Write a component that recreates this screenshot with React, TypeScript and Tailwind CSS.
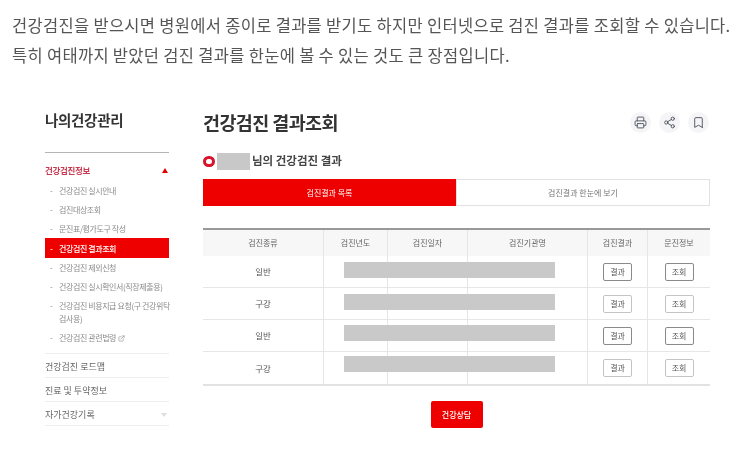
import React from 'react';
import { Printer, Share2, Bookmark, ExternalLink } from 'lucide-react';

const subMenu = [
  { label: '건강검진 실시안내', h: 'h-[19px]' },
  { label: '검진대상조회', h: 'h-[19px]' },
  { label: '문진표/평가도구 작성', h: 'h-[19px]' },
  { label: '건강검진 결과조회', h: 'h-[20px]', active: true },
  { label: '건강검진 제외신청', h: 'h-[19px]' },
  { label: '건강검진 실시확인서(직장제출용)', h: 'h-[19px]' },
  { label: '건강검진 비용지급 요청(구 건강위탁\n검사용)', h: 'h-[32px]' },
  { label: '건강검진 관련법령', h: 'h-[19px]', link: true },
];

const rows = [
  { kind: '일반', top: 'top-[6px]' },
  { kind: '구강', top: 'top-[6px]' },
  { kind: '일반', top: 'top-[5px]' },
  { kind: '구강', top: 'top-[4px]' },
];

const cellBorder = 'border-r border-[#e6e6e6]';

const SmallButton: React.FC<{ label: string; dark: boolean }> = ({ label, dark }) => (
  <button
    className={`w-[29px] h-[18px] rounded-[2px] border bg-white text-[8px] leading-none text-[#555] ${
      dark ? 'border-[#8a8a8a]' : 'border-[#c4c4c4]'
    }`}
  >
    <span className="blur-[0.3px]">{label}</span>
  </button>
);

const App: React.FC = () => {
  return (
    <div
      className="w-[755px] h-[455px] overflow-hidden bg-white pt-[10px]"
      style={{ fontFamily: '"Noto Sans CJK KR", "Noto Sans", sans-serif' }}
    >
      <p className="pl-[12px] text-[16.5px] leading-[30px] tracking-[0.3px] text-[#555] whitespace-nowrap blur-[0.3px]">
        건강검진을 받으시면 병원에서 종이로 결과를 받기도 하지만 인터넷으로 검진 결과를 조회할 수 있습니다.
        <br />
        특히 여태까지 받았던 검진 결과를 한눈에 볼 수 있는 것도 큰 장점입니다.
      </p>

      <div className="flex pl-[45px] pt-[39px]">
        {/* left menu */}
        <aside className="w-[124px] mr-[34px]">
          <h2 className="h-[26px] -mt-[2px] text-[14.5px] leading-[26px] tracking-[-0.3px] font-bold text-[#333] blur-[0.3px]">
            나의건강관리
          </h2>
          <div className="mt-[19px] border-t border-[#b5b5b5] h-[28px] pt-[8px] flex items-center justify-between">
            <span className="text-[8.5px] font-bold tracking-[-0.3px] text-[#c8384f] blur-[0.3px]">건강검진정보</span>
            <span className="mr-[1px] w-0 h-0 border-x-[3.5px] border-x-transparent border-b-[5px] border-b-[#e60000]" />
          </div>
          <ul className="mt-[1px] pb-[6px] border-b border-[#eeeeee]">
            {subMenu.map((item) => (
              <li
                key={item.label}
                className={`flex pl-[5px] text-[8px] leading-[13px] tracking-[-0.4px] whitespace-pre blur-[0.35px] ${item.h} ${
                  item.active ? 'bg-[#ee0000] text-white font-medium items-center' : 'text-[#8b8b8b] pt-[3px] items-start'
                }`}
              >
                <span className="w-[9px] shrink-0">-</span>
                <span>
                  {item.label}
                  {item.link && <ExternalLink size={7} className="inline ml-[2px] mb-[1px]" />}
                </span>
              </li>
            ))}
          </ul>
          {['건강검진 로드맵', '진료 및 투약정보', '자가건강기록'].map((label, i) => (
            <div
              key={label}
              className="h-[24px] pt-[2px] flex items-center justify-between border-b border-[#eeeeee] text-[9px] text-[#666]"
            >
              <span className="blur-[0.3px]">{label}</span>
              {i === 2 && (
                <span className="mr-[2px] w-0 h-0 border-x-[3px] border-x-transparent border-t-[4px] border-t-[#dddddd]" />
              )}
            </div>
          ))}
        </aside>

        {/* main */}
        <main className="w-[507px]">
          <div className="flex items-center justify-between h-[26px]">
            <h1 className="text-[18.5px] leading-[26px] tracking-[-0.6px] font-bold text-[#333] blur-[0.3px]">
              건강검진 결과조회
            </h1>
            <div className="flex gap-[8px] pr-[1px]">
              {[Printer, Share2, Bookmark].map((Icon, i) => (
                <span
                  key={i}
                  className="w-[21px] h-[21px] rounded-full bg-[#f5f5f7] flex items-center justify-center text-[#4d525e]"
                >
                  <Icon size={13} strokeWidth={1.7} />
                </span>
              ))}
            </div>
          </div>

          <div className="flex items-center h-[18px] mt-[17px]">
            <span className="w-[12px] h-[11px] rounded-full border-[3.5px] border-[#d8142c] bg-white" />
            <span className="ml-[2px] w-[33px] h-[17px] bg-[#c8c8c8]" />
            <span className="ml-[2px] text-[11.5px] font-bold text-[#444] blur-[0.3px]">님의 건강검진 결과</span>
          </div>

          <div className="flex h-[27px] mt-[9px] text-[8px]">
            <div className="w-[253px] bg-[#ee0000] text-white flex items-center justify-center">
              <span className="blur-[0.3px]">검진결과 목록</span>
            </div>
            <div className="flex-1 border border-[#e2e2e2] text-[#777] flex items-center justify-center">
              <span className="blur-[0.3px]">검진결과 한눈에 보기</span>
            </div>
          </div>

          {/* result table */}
          <div className="mt-[22px] border-t-2 border-b-2 border-t-[#999999] border-b-[#e2e2e2] text-[8px] text-[#666]">
            <div className="grid grid-cols-[121px_64px_80px_120px_60px_62px] h-[26px] bg-[#f7f7f7] items-stretch">
              {['검진종류', '검진년도', '검진일자', '검진기관명', '검진결과', '문진정보'].map((head, i) => (
                <div key={head} className={`flex items-center justify-center ${i < 5 ? cellBorder : ''}`}>
                  <span className="blur-[0.3px]">{head}</span>
                </div>
              ))}
            </div>
            {rows.map((row, i) => (
              <div
                key={i}
                className={`grid grid-cols-[121px_64px_80px_120px_60px_62px] h-[32px] ${
                  i < 3 ? 'border-b border-[#e6e6e6]' : ''
                }`}
              >
                <div className={`flex items-center justify-center text-[8.5px] text-[#555] ${cellBorder}`}>
                  <span className="blur-[0.3px]">{row.kind}</span>
                </div>
                <div className={`relative ${cellBorder}`}>
                  {/* redacted values lie over the three middle cells */}
                  <div className={`absolute left-[20px] w-[211px] h-[16px] bg-[#c9c9c9] ${row.top}`} />
                </div>
                <div className={cellBorder} />
                <div className={cellBorder} />
                <div className={`flex items-center justify-center ${cellBorder}`}>
                  <SmallButton label="결과" dark={i % 2 === 0} />
                </div>
                <div className="flex items-center justify-center">
                  <SmallButton label="조회" dark={i % 2 === 0} />
                </div>
              </div>
            ))}
          </div>

          <div className="flex justify-center pt-[15px]">
            <button className="w-[52px] h-[27px] rounded-[2px] bg-[#ee0000] text-white text-[8px] font-medium">
              <span className="blur-[0.3px]">건강상담</span>
            </button>
          </div>
        </main>
      </div>
    </div>
  );
};

export default App;
